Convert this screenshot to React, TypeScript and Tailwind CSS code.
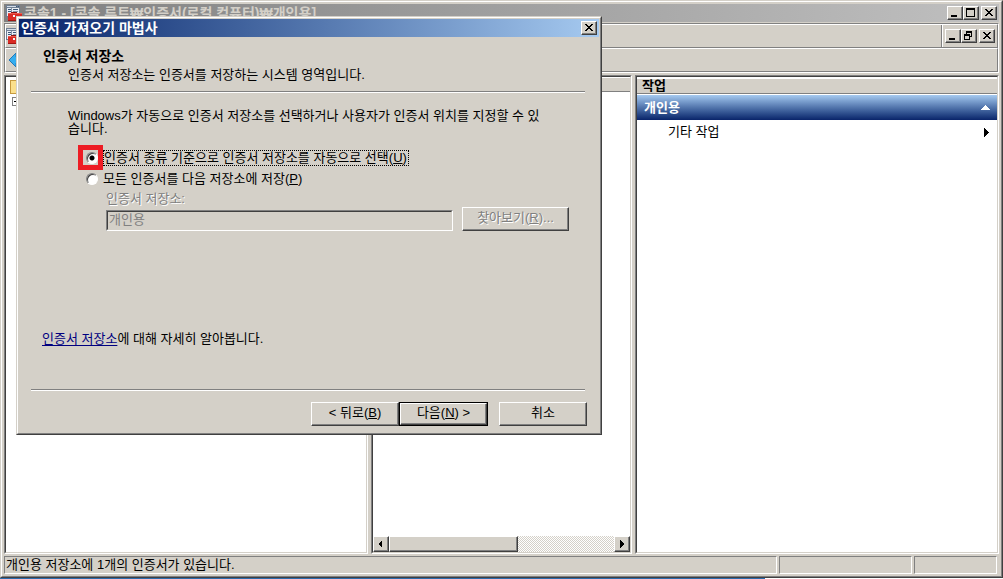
import type { ReactNode } from "react";

const raised =
  "border border-t-white border-l-white border-b-[#404040] border-r-[#404040] bg-[#d4d0c8] shadow-[inset_-1px_-1px_0_#808080]";
const sunken =
  "border border-t-[#808080] border-l-[#808080] border-b-white border-r-white";
const innerSunken =
  "border border-t-[#404040] border-l-[#404040] border-b-[#d4d0c8] border-r-[#d4d0c8]";

type Glyph = "min" | "max" | "restore" | "close";

const glyphs: Record<Glyph, ReactNode> = {
  min: <path d="M3 8h6v2H3z" />,
  max: <path fillRule="evenodd" d="M2 1h9v9H2zM3 3v6h7V3z" />,
  restore: (
    <path
      fillRule="evenodd"
      d="M4 1h6v6H8v3H2V4h2zM5 3v1h3v2h1V3zM3 6v3h4V6z"
    />
  ),
  close: (
    <path d="M3 2h2v1h-2zM9 2h2v1h-2zM4 3h2v1h-2zM8 3h2v1h-2zM5 4h4v1h-4zM6 5h2v1h-2zM5 6h4v1h-4zM4 7h2v1h-2zM8 7h2v1h-2zM3 8h2v1h-2zM9 8h2v1h-2z" />
  ),
};

function CaptionButton({ glyph, label }: { glyph: Glyph; label: string }) {
  return (
    <button type="button" aria-label={label} className={`h-3.5 w-4 shrink-0 ${raised}`}>
      <svg width="14" height="12" viewBox="0 0 14 12" shapeRendering="crispEdges">
        {glyphs[glyph]}
      </svg>
    </button>
  );
}

function CaptionGroup({ restore = false }: { restore?: boolean }) {
  return (
    <div className="flex shrink-0 items-center">
      <CaptionButton glyph="min" label="최소화" />
      <CaptionButton glyph={restore ? "restore" : "max"} label={restore ? "이전 크기로" : "최대화"} />
      <span className="w-0.5" />
      <CaptionButton glyph="close" label="닫기" />
    </div>
  );
}

function ConsoleIcon() {
  return (
    <svg width="16" height="16" viewBox="0 0 16 16" className="shrink-0" shapeRendering="crispEdges">
      <path fill="#6f7f93" d="M0 0h14v12H0z" />
      <path fill="#e9eef5" d="M1 3h12v8H1z" />
      <path fill="#d6dfea" d="M1 1h9v1H1z" />
      <path fill="#3d5878" d="M10 1h1v1h-1zM12 1h1v1h-1zM2 4h4v1H2zM7 4h5v1H7zM2 6h3v1H2z" />
      <path fill="#8796a9" d="M7 6h5v1H7zM5 3h1v6H5z" />
      <path fill="#8c1513" d="M5 7h6v1H5z" />
      <path fill="#d92b24" d="M2 8h14v8H2z" />
      <path fill="#ee5a4c" d="M2 8h14v1H2z" />
      <path fill="#a31612" d="M2 15h14v1H2z" />
      <path fill="#f4f4f4" d="M7 10h2v2H7z" />
    </svg>
  );
}

function Rule() {
  return <div className="h-0.5 border-t border-b border-t-[#808080] border-b-white" />;
}

function WizardButton({ children, primary = false }: { children: ReactNode; primary?: boolean }) {
  return (
    <span className={primary ? "flex border border-black" : "flex"}>
      <button
        type="button"
        className={`flex items-center justify-center pb-0.5 whitespace-pre ${primary ? "h-[22px] w-[87px]" : "h-6 w-[88px]"} ${raised}`}
      >
        {children}
      </button>
    </span>
  );
}

const radio =
  "size-3 shrink-0 appearance-none rounded-full border border-t-[#808080] border-l-[#808080] border-b-white border-r-white bg-white shadow-[inset_1px_1px_0_#404040] checked:bg-[radial-gradient(circle,#000_2px,#fff_3px)]";

function Wizard() {
  return (
    <section
      role="dialog"
      aria-labelledby="wizard-title"
      className="absolute top-4 left-4 w-[586px] border border-t-[#d4d0c8] border-l-[#d4d0c8] border-r-[#404040] border-b-[#404040] bg-[#d4d0c8] text-black"
    >
      <div className="border border-t-white border-l-white border-r-[#808080] border-b-[#808080] p-px">
        <header className="flex h-[18px] items-center justify-between bg-linear-to-r from-[#0a246a] to-[#a6caf0] pr-0.5 pl-0.5 text-[14px] leading-4 font-bold text-white">
          <h1 id="wizard-title">인증서 가져오기 마법사</h1>
          <CaptionButton glyph="close" label="닫기" />
        </header>

        <div className="px-3 pt-2.5 pb-1.5 whitespace-nowrap">
          <h2 className="pl-3 text-[14px] leading-[18px] font-bold">인증서 저장소</h2>
          <p className="pl-[37px] leading-5">인증서 저장소는 인증서를 저장하는 시스템 영역입니다.</p>
          <div className="mt-1.5 mr-0.5">
            <Rule />
          </div>

          <p className="mt-4 pl-[37px] leading-[13px]">
            Windows가 자동으로 인증서 저장소를 선택하거나 사용자가 인증서 위치를 지정할 수 있
            <br />
            습니다.
          </p>

          <div className="mt-2.5 ml-[47px] flex items-center">
            <span className="flex size-[25px] items-center justify-center border-5 border-[#ed1c24] pl-0.5">
              <input id="store-auto" type="radio" name="store" defaultChecked className={radio} />
            </span>
            <label htmlFor="store-auto" className="border border-dotted border-black pr-px leading-[14px]">
              인증서 종류 기준으로 인증서 저장소를 자동으로 선택(<u>U</u>)
            </label>
          </div>
          <div className="ml-[55px] flex h-[18px] items-center gap-[5px]">
            <input id="store-manual" type="radio" name="store" className={radio} />
            <label htmlFor="store-manual">
              모든 인증서를 다음 저장소에 저장(<u>P</u>)
            </label>
          </div>
          <label
            htmlFor="store-name"
            className="ml-[75px] block pt-0.5 leading-[17px] text-[#808080] [text-shadow:1px_1px_0_#fff]"
          >
            인증서 저장소:
          </label>
          <div className="ml-[75px] flex items-end gap-[9px]">
            <div className={`w-[347px] ${sunken}`}>
              <input
                id="store-name"
                disabled
                defaultValue="개인용"
                className={`block h-[19px] w-full bg-[#d4d0c8] px-px pb-1 leading-[13px] text-[#808080] ${innerSunken}`}
              />
            </div>
            <button
              type="button"
              disabled
              className={`flex h-6 w-[107px] items-center justify-center pb-0.5 text-[#808080] [text-shadow:1px_1px_0_#fff] ${raised}`}
            >
              찾아보기(<u>R</u>)...
            </button>
          </div>

          <p className="mt-[98px] pl-[11px] leading-5">
            <a href="#store-help" className="text-[#000080] underline underline-offset-2">
              인증서 저장소
            </a>
            에 대해 자세히 알아봅니다.
          </p>
          <div className="mt-10 mr-0.5">
            <Rule />
          </div>
          <div className="mt-[11px] flex justify-end">
            <WizardButton>
              &lt; 뒤로(<u>B</u>)
            </WizardButton>
            <WizardButton primary>
              다음(<u>N</u>) &gt;
            </WizardButton>
            <span className="w-[11px]" />
            <WizardButton>취소</WizardButton>
          </div>
        </div>
      </div>
    </section>
  );
}

function ScrollArrow({ label, d }: { label: string; d: string }) {
  return (
    <button type="button" aria-label={label} className={`h-4 w-4 shrink-0 ${raised}`}>
      <svg width="14" height="14" viewBox="0 0 14 14" shapeRendering="crispEdges">
        <path d={d} />
      </svg>
    </button>
  );
}

function Pane({ className, children }: { className: string; children?: ReactNode }) {
  return (
    <div className={`flex ${className} ${sunken}`}>
      <div className={`flex min-w-0 flex-1 flex-col bg-white ${innerSunken}`}>{children}</div>
    </div>
  );
}

export default function App() {
  return (
    <div className="relative flex min-h-screen flex-col bg-white font-['Liberation_Sans','Noto_Sans_CJK_KR',sans-serif] text-[13px] leading-4 text-black">
      <main className="flex flex-1 flex-col border border-t-[#d4d0c8] border-l-[#d4d0c8] border-r-[#404040] border-b-[#404040] bg-[#d4d0c8]">
        <div className="flex flex-1 flex-col border border-t-white border-l-white border-r-[#808080] border-b-[#808080] p-0.5">
          <header className="flex h-[18px] shrink-0 items-center justify-between bg-linear-to-r from-[#808080] to-[#c0c0c0] pr-0.5 pl-0.5 font-bold text-[#d4d0c8]">
            <div className="flex items-center gap-0.5 text-[14px] leading-4 whitespace-nowrap">
              <ConsoleIcon />
              <span>콘솔1 - [콘솔 루트₩인증서(로컬 컴퓨터)₩개인용]</span>
            </div>
            <CaptionGroup />
          </header>

          <div className="mt-px shrink-0 border border-t-[#808080] border-l-[#808080] border-r-white border-b-white">
            <div className="flex h-6 border border-t-white border-l-white border-r-[#808080] border-b-[#808080]">
              <div className="flex flex-1 items-center border-r border-[#808080]">
                <ConsoleIcon />
              </div>
              <div className="flex items-center border-l border-white pr-0.5 pl-0.5">
                <CaptionGroup restore />
              </div>
            </div>
            <div className="flex h-6 items-center border border-t-white border-l-white border-r-[#808080] border-b-[#808080] pl-[3px]">
              <button type="button" aria-label="뒤로">
                <svg width="16" height="16" viewBox="0 0 16 16">
                  <path d="M0 8 7 1v4h9v6H7v4z" fill="#35aef0" stroke="#2378b8" />
                </svg>
              </button>
            </div>
          </div>

          <div className="mt-0.5 flex flex-1 gap-[3px]">
            <Pane className="w-[364px]">
              <div className="pt-0.5 pl-[3px]">
                <svg width="16" height="30" viewBox="0 0 16 30" shapeRendering="crispEdges">
                  <path d="M1 1h6l2 2h6v11H1z" fill="#fbe08c" stroke="#c79a3e" />
                  <path d="M3.5 18.500h8v8h-8z" fill="#fff" stroke="#808080" />
                  <path d="M5 22h5v1H5z" />
                </svg>
              </div>
            </Pane>
            <Pane className="w-[261px]">
              <div className="h-[15px] border-t border-b border-t-white border-b-[#808080] bg-[#d4d0c8]" />
              <div className="mt-auto flex h-4 bg-[repeating-conic-gradient(#d4d0c8_0_25%,#fff_0_50%)] bg-size-[2px_2px]">
                <ScrollArrow label="왼쪽으로 스크롤" d="M4 7l4-4v8z" />
                <div className={`w-[129px] ${raised}`} />
                <span className="flex-1" />
                <ScrollArrow label="오른쪽으로 스크롤" d="M9 7l-4-4v8z" />
              </div>
            </Pane>
            <Pane className="flex-1">
              <h2 className="mt-px h-4 border-t border-b border-t-white border-b-[#808080] bg-[#d4d0c8] pl-[5px] text-[13px] leading-[14px] font-bold">
                작업
              </h2>
              <div className="mt-px flex h-[25px] items-center justify-between bg-linear-to-b from-[#a6caf0] to-[#0a246a] pr-[7px] pl-[7px] font-bold text-white">
                <span>개인용</span>
                <svg width="9" height="5" viewBox="0 0 9 5" shapeRendering="crispEdges">
                  <path d="M0 5 4.500 0 9 5z" fill="#fff" />
                </svg>
              </div>
              <button type="button" className="flex h-6 items-center justify-between pr-2 pl-[31px]">
                <span>기타 작업</span>
                <svg width="5" height="9" viewBox="0 0 5 9" shapeRendering="crispEdges">
                  <path d="M0 0 5 4.500 0 9z" />
                </svg>
              </button>
            </Pane>
          </div>

          <footer className="mt-0.5 mr-0.5 flex h-[18px] shrink-0 gap-0.5">
            <div className={`flex flex-1 items-center pl-px whitespace-nowrap ${sunken}`}>
              개인용 저장소에 1개의 인증서가 있습니다.
            </div>
            <div className={`w-[133px] ${sunken}`} />
            <div className={`w-[83px] ${sunken}`} />
          </footer>
        </div>
      </main>
      <div className="h-px w-[765px] shrink-0 bg-[#2a6cb0]" />
      <Wizard />
    </div>
  );
}
